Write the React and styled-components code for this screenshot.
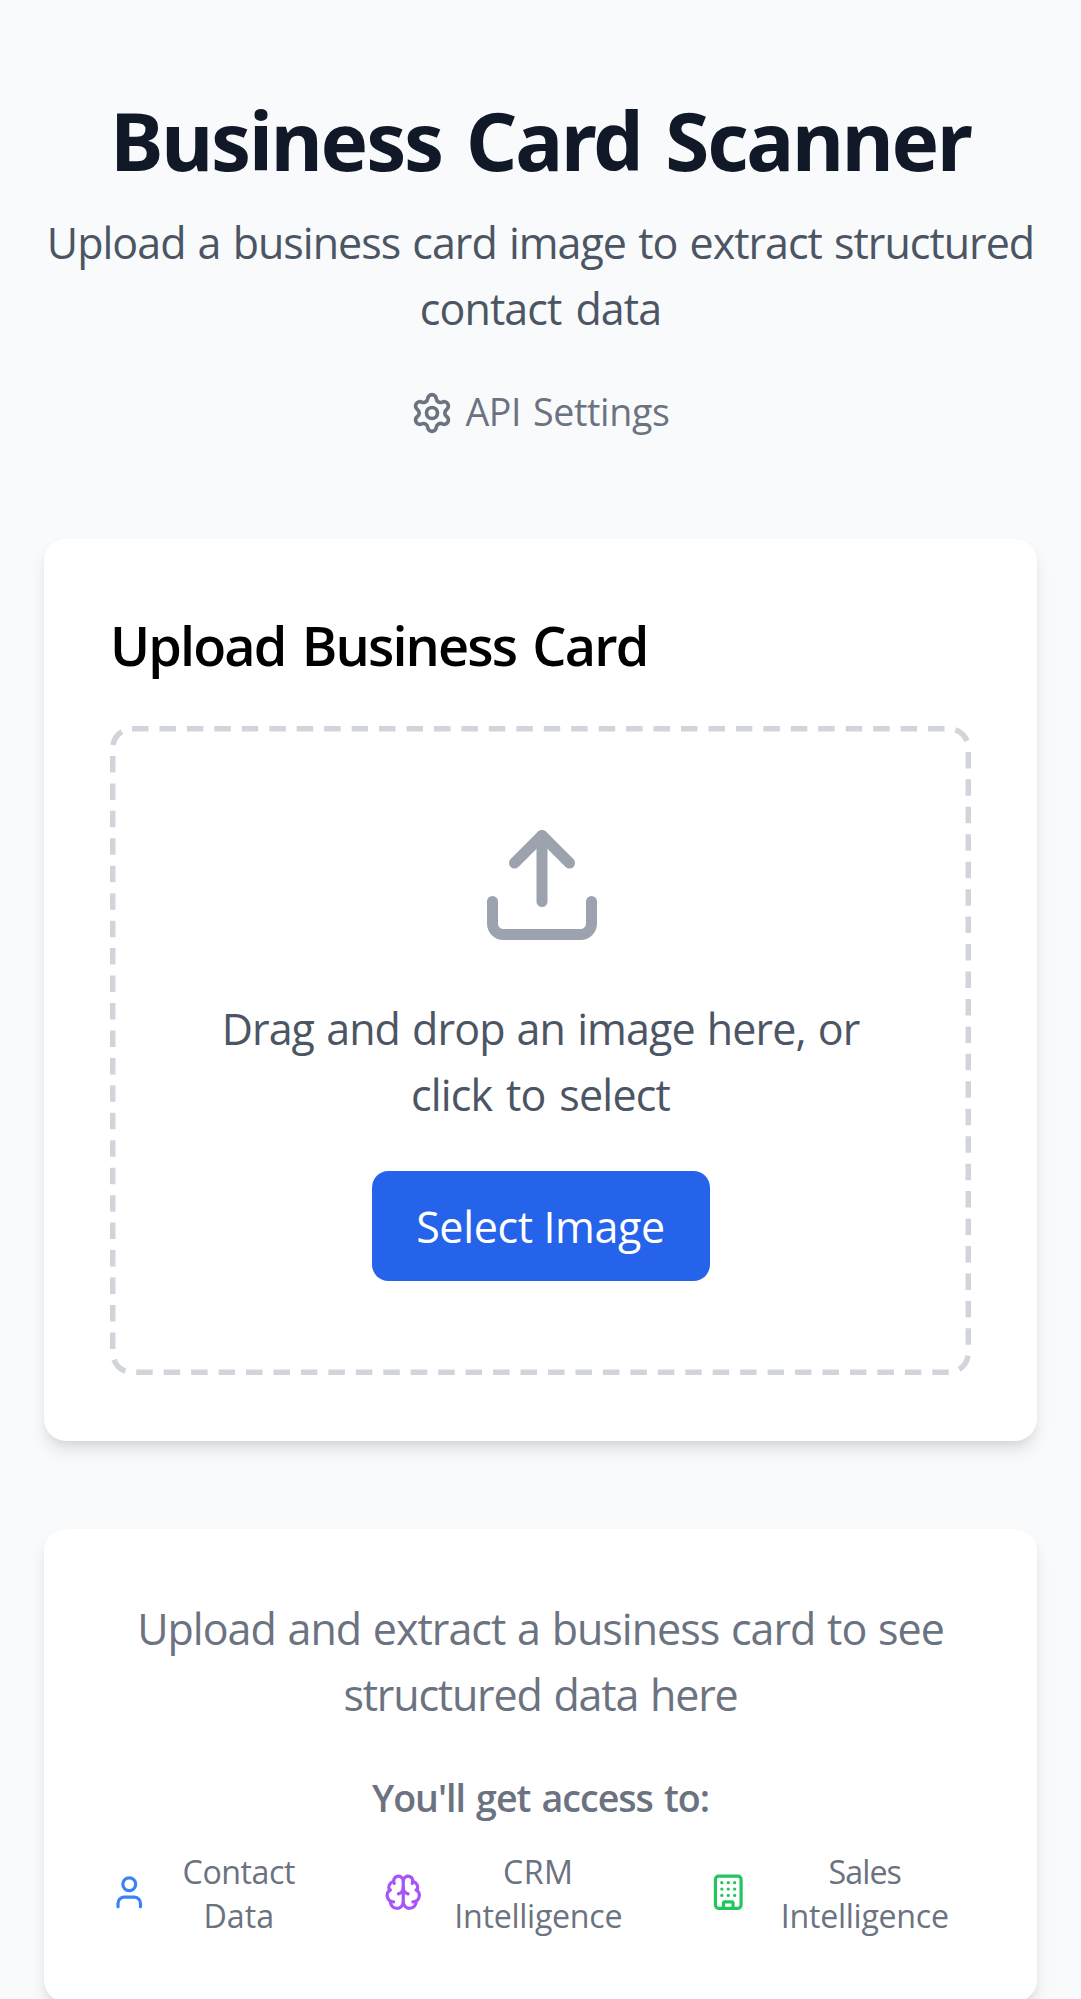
import React from "react";
import styled, { createGlobalStyle } from "styled-components";
import { Settings, Upload, User, Brain, Building } from "lucide-react";

const GlobalStyle = createGlobalStyle`
  *, *::before, *::after { box-sizing: border-box; }
  body {
    margin: 0;
    background: #f9fafc;
    font-family: "Open Sans", "Noto Sans", sans-serif;
    overflow: hidden;
  }
  h1, h2, p { margin: 0; }
`;

const Page = styled.main`
  height: 1999px;
  overflow: hidden;
  padding: 88px 44px 0;
`;

const Header = styled.header`
  display: flex;
  flex-direction: column;
  align-items: center;
  margin-bottom: 99px;
  text-align: center;
`;

const Title = styled.h1`
  margin: 2px 0 21px;
  font-family: "Noto Sans", sans-serif;
  font-size: 80px;
  line-height: 99px;
  font-weight: 700;
  letter-spacing: -2.2px;
  word-spacing: 5.4px;
  color: #111827;
  white-space: nowrap;
`;

const Line = styled.span`
  display: block;
  white-space: nowrap;
  letter-spacing: ${({ $track }) => $track || 0}px;
  word-spacing: ${({ $gap }) => $gap || 0}px;
`;

const Lead = styled.p`
  font-size: 43px;
  line-height: 66px;
  text-align: center;
  color: #4b5563;
`;

const EmptyText = styled(Lead)`
  padding-top: 1px;
  color: #6b7280;
`;

const SettingsButton = styled.button`
  display: flex;
  align-items: center;
  gap: 11px;
  height: 55px;
  margin: 43px 1px 0 0;
  padding: 0;
  border: 0;
  background: none;
  color: #6b7280;
  font: inherit;
  font-size: 37.6px;
  line-height: 54px;
  letter-spacing: -0.35px;
  word-spacing: 2.3px;
`;

const ButtonLabel = styled.span`
  padding-bottom: 1px;
`;

const Card = styled.section`
  margin-bottom: 88px;
  padding: 66px;
  border-radius: 22px;
  background: #fff;
  box-shadow: 0 11px 16.5px -2.75px rgba(0, 0, 0, 0.1),
    0 5.5px 11px -5.5px rgba(0, 0, 0, 0.1);
`;

const CardTitle = styled.h2`
  margin: 2px 0 42px;
  font-size: 54px;
  line-height: 77px;
  font-weight: 600;
  letter-spacing: -1.85px;
  word-spacing: 4px;
  color: #000;
  white-space: nowrap;
`;

const DropZone = styled.div`
  position: relative;
  display: flex;
  flex-direction: column;
  align-items: center;
  height: 649px;
  padding: 93px;
  border-radius: 22px;
`;

const DashedOutline = styled.svg`
  position: absolute;
  inset: 0;
  width: 100%;
  height: 100%;
  fill: none;
  stroke: #d1d5db;
  stroke-width: 5.5;
  stroke-dasharray: 16.5 10.95;
  pointer-events: none;
`;

const UploadIcon = styled(Upload)`
  flex: none;
  margin-left: 2px;
  color: #9ca3af;
`;

const DropText = styled(Lead)`
  margin: 44.5px 0 43.5px;
`;

const SelectButton = styled.button`
  width: 338px;
  height: 110px;
  flex: none;
  padding: 1px 0 0;
  border: 0;
  border-radius: 16.5px;
  background: #2563eb;
  color: #fff;
  font: inherit;
  font-size: 43px;
  line-height: 66px;
  letter-spacing: -0.36px;
`;

const AccessTitle = styled.p`
  margin: 42px 0 23px;
  font-size: 37.6px;
  line-height: 55px;
  font-weight: 600;
  letter-spacing: -1px;
  word-spacing: 2.3px;
  text-align: center;
  color: #6b7280;
`;

const Features = styled.div`
  display: grid;
  grid-template-columns: 208px 259px 262px;
  gap: 66px;
`;

const Feature = styled.div`
  display: flex;
  align-items: center;
  gap: 11px;
  color: ${({ $color }) => $color};

  svg { flex: none; }
`;

const FeatureText = styled.div`
  flex: 1;
  padding-top: 2px;
  margin-bottom: -2px;
  font-size: 32.2px;
  line-height: 44px;
  text-align: center;
  color: #6b7280;
`;

const features = [
  { Icon: User, color: "#3b82f6", lines: [["Contact", -0.48], ["Data", 0]] },
  { Icon: Brain, color: "#a855f7", lines: [["CRM", 0.5], ["Intelligence", -0.3]] },
  { Icon: Building, color: "#22c55e", lines: [["Sales", -0.9], ["Intelligence", -0.3]] },
];

export default function App() {
  return (
    <Page>
      <GlobalStyle />
      <Header>
        <Title>Business Card Scanner</Title>
        <Lead>
          <Line $track={-1} $gap={2}>Upload a business card image to extract structured</Line>
          <Line $track={-0.9} $gap={3.7}>contact data</Line>
        </Lead>
        <SettingsButton>
          <Settings size={44} />
          <ButtonLabel>API Settings</ButtonLabel>
        </SettingsButton>
      </Header>

      <Card>
        <CardTitle>Upload Business Card</CardTitle>
        <DropZone>
          <DashedOutline viewBox="0 0 861 649">
            <rect x="2.75" y="2.75" width="855.5" height="643.5" rx="19.25" />
          </DashedOutline>
          <UploadIcon size={132} />
          <DropText>
            <Line $track={-0.9} $gap={1.8}>Drag and drop an image here, or</Line>
            <Line $track={-0.8} $gap={3.3}>click to select</Line>
          </DropText>
          <SelectButton>Select Image</SelectButton>
        </DropZone>
      </Card>

      <Card>
        <EmptyText>
          <Line $track={-1} $gap={1.6}>Upload and extract a business card to see</Line>
          <Line $track={-1.2} $gap={2}>structured data here</Line>
        </EmptyText>
        <AccessTitle>You'll get access to:</AccessTitle>
        <Features>
          {features.map(({ Icon, color, lines }) => (
            <Feature key={color} $color={color}>
              <Icon size={38.5} />
              <FeatureText>
                {lines.map(([text, track]) => (
                  <Line key={text} $track={track}>{text}</Line>
                ))}
              </FeatureText>
            </Feature>
          ))}
        </Features>
      </Card>
    </Page>
  );
}
